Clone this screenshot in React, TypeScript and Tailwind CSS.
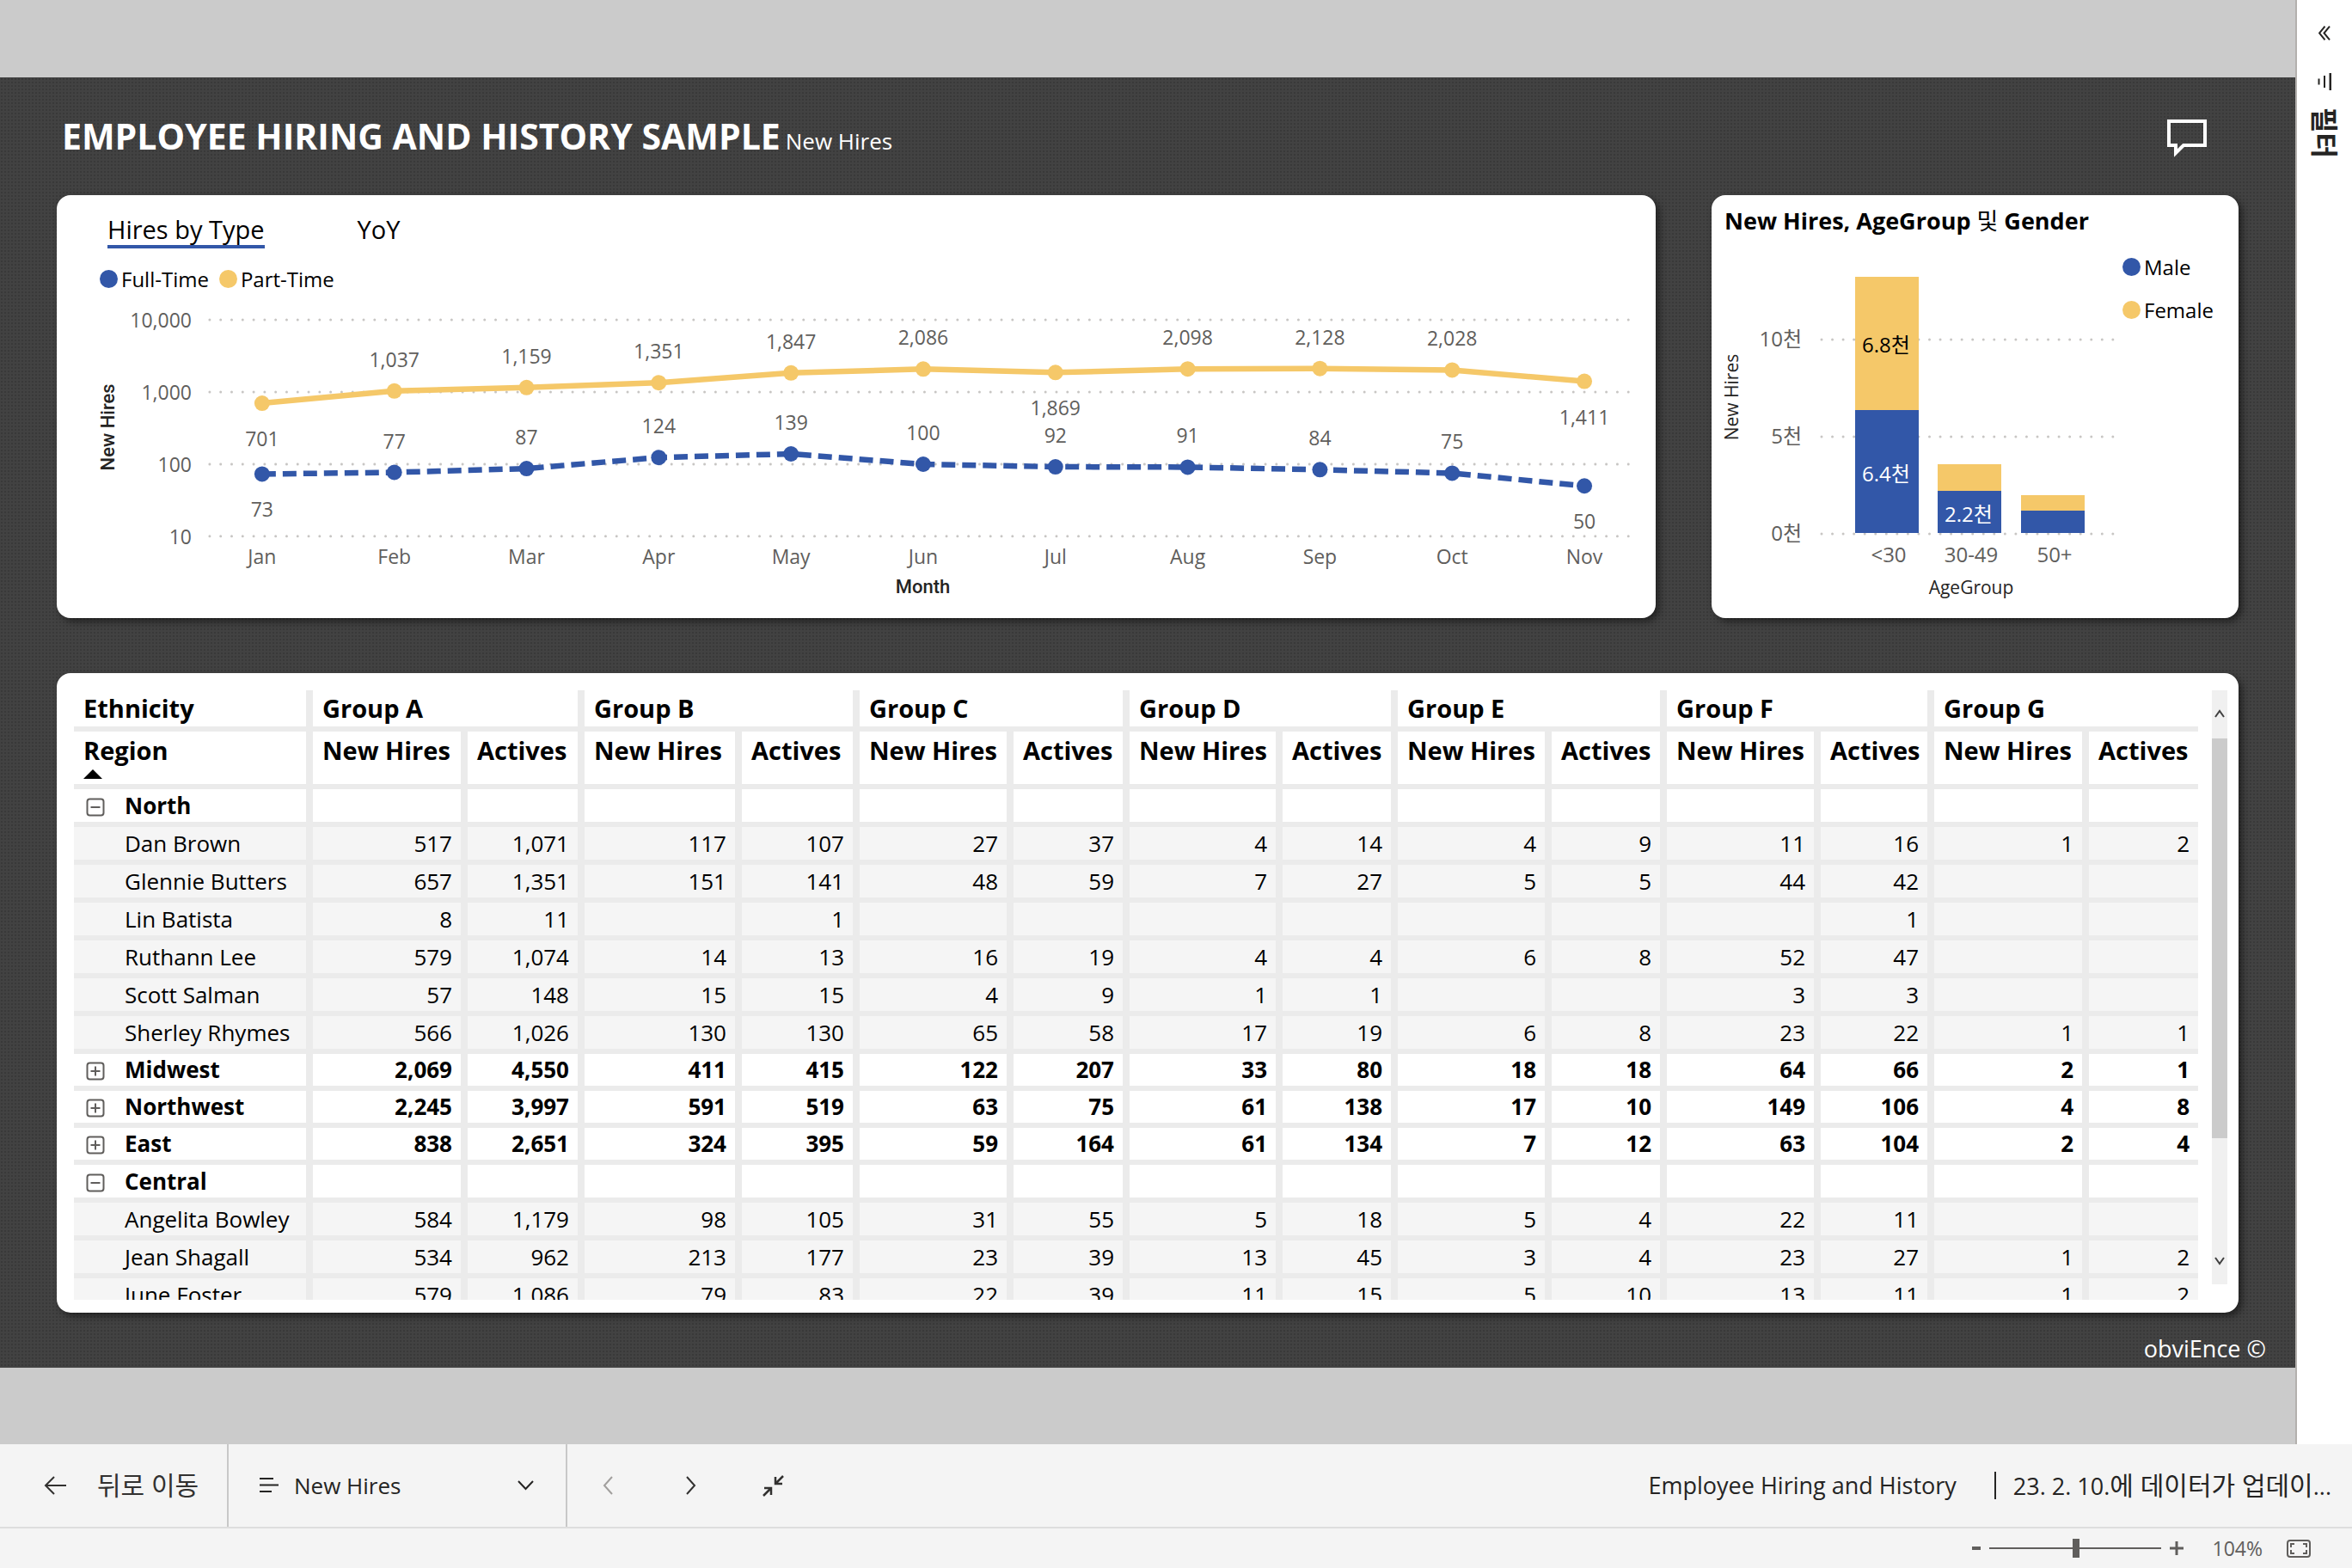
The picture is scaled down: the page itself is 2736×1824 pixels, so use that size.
import { useState } from 'react'

const FULL_TIME = '#3257A8'
const PART_TIME = '#F5C869'

const months = ['Jan', 'Feb', 'Mar', 'Apr', 'May', 'Jun', 'Jul', 'Aug', 'Sep', 'Oct', 'Nov']
const partTime = [701, 1037, 1159, 1351, 1847, 2086, 1869, 2098, 2128, 2028, 1411]
const fullTime = [73, 77, 87, 124, 139, 100, 92, 91, 84, 75, 50]
// months whose label sits under the point
const partBelow = [0, 6, 10]
const fullBelow = [0, 10]

const groups = ['A', 'B', 'C', 'D', 'E', 'F', 'G']

type Row = { name: string; kind: 'open' | 'closed' | 'child'; values: string[] }

const rows: Row[] = [
  { name: 'North', kind: 'open', values: [] },
  { name: 'Dan Brown', kind: 'child', values: ['517', '1,071', '117', '107', '27', '37', '4', '14', '4', '9', '11', '16', '1', '2'] },
  { name: 'Glennie Butters', kind: 'child', values: ['657', '1,351', '151', '141', '48', '59', '7', '27', '5', '5', '44', '42', '', ''] },
  { name: 'Lin Batista', kind: 'child', values: ['8', '11', '', '1', '', '', '', '', '', '', '', '1', '', ''] },
  { name: 'Ruthann Lee', kind: 'child', values: ['579', '1,074', '14', '13', '16', '19', '4', '4', '6', '8', '52', '47', '', ''] },
  { name: 'Scott Salman', kind: 'child', values: ['57', '148', '15', '15', '4', '9', '1', '1', '', '', '3', '3', '', ''] },
  { name: 'Sherley Rhymes', kind: 'child', values: ['566', '1,026', '130', '130', '65', '58', '17', '19', '6', '8', '23', '22', '1', '1'] },
  { name: 'Midwest', kind: 'closed', values: ['2,069', '4,550', '411', '415', '122', '207', '33', '80', '18', '18', '64', '66', '2', '1'] },
  { name: 'Northwest', kind: 'closed', values: ['2,245', '3,997', '591', '519', '63', '75', '61', '138', '17', '10', '149', '106', '4', '8'] },
  { name: 'East', kind: 'closed', values: ['838', '2,651', '324', '395', '59', '164', '61', '134', '7', '12', '63', '104', '2', '4'] },
  { name: 'Central', kind: 'open', values: [] },
  { name: 'Angelita Bowley', kind: 'child', values: ['584', '1,179', '98', '105', '31', '55', '5', '18', '5', '4', '22', '11', '', ''] },
  { name: 'Jean Shagall', kind: 'child', values: ['534', '962', '213', '177', '23', '39', '13', '45', '3', '4', '23', '27', '1', '2'] },
  { name: 'June Foster', kind: 'child', values: ['579', '1,086', '79', '83', '22', '39', '11', '15', '5', '10', '13', '11', '1', '2'] },
]

function Legend({ color, label }: { color: string; label: string }) {
  return (
    <span className="flex items-center gap-1 text-[24px] leading-8 text-black">
      <svg width="21" height="21" viewBox="0 0 21 21"><circle cx="10.5" cy="10.5" r="10.5" fill={color} /></svg>
      {label}
    </span>
  )
}

function HiresChart() {
  const px = (i: number) => 239 + i * 153.9
  const py = (v: number) => 278 - (Math.log10(v) - 1) * 83.9
  const points = (data: number[]) => data.map((v, i) => `${px(i)},${py(v)}`).join(' ')

  return (
    <svg viewBox="0 0 1861 373" className="mt-[5px] block w-full" fontSize="23" fill="#605E5C" role="img" aria-label="New hires by month">
      {['10,000', '1,000', '100', '10'].map((tick, i) => (
        <g key={tick}>
          <line x1="178" x2="1833" y1={26 + i * 84} y2={26 + i * 84} stroke="#c8c6c4" strokeWidth="3" strokeLinecap="round" strokeDasharray="0 12.8" />
          <text x="157" y={35 + i * 84} textAnchor="end">{tick}</text>
        </g>
      ))}
      <polyline points={points(partTime)} fill="none" stroke={PART_TIME} strokeWidth="6.500" strokeLinejoin="round" />
      <polyline points={points(fullTime)} fill="none" stroke={FULL_TIME} strokeWidth="6.500" strokeLinejoin="round" strokeDasharray="16 8" />
      {months.map((month, i) => (
        <g key={month} textAnchor="middle">
          <circle cx={px(i)} cy={py(partTime[i])} r="9" fill={PART_TIME} />
          <circle cx={px(i)} cy={py(fullTime[i])} r="9" fill={FULL_TIME} />
          <text x={px(i)} y={py(partTime[i]) + (partBelow.includes(i) ? 50 : -28)}>{partTime[i].toLocaleString('en-US')}</text>
          <text x={px(i)} y={py(fullTime[i]) + (fullBelow.includes(i) ? 50 : -28)}>{fullTime[i]}</text>
          <text x={px(i)} y="310">{month}</text>
        </g>
      ))}
      <g fontFamily="Roboto" fontSize="22" fontWeight="500" fill="#252423" textAnchor="middle">
        <text x="1008" y="344">Month</text>
        <text transform="translate(67 151) rotate(-90)">New Hires</text>
      </g>
    </svg>
  )
}

const bars = [
  { label: '<30', x: 167, top: 39, split: 194, female: '6.8천', male: '6.4천' },
  { label: '30-49', x: 263, top: 257, split: 288, female: '', male: '2.2천' },
  { label: '50+', x: 360, top: 293, split: 311, female: '', male: '' },
]

function AgeChart() {
  return (
    <svg viewBox="0 0 478 436" className="block min-w-0 flex-1" fontSize="24" fill="#605E5C" role="img" aria-label="New hires by age group and gender">
      {['10천', '5천', '0천'].map((tick, i) => (
        <g key={tick}>
          <line x1="128" x2="468" y1={112 + i * 113} y2={112 + i * 113} stroke="#c8c6c4" strokeWidth="3" strokeLinecap="round" strokeDasharray="0 12.55" />
          <text x="105" y={120 + i * 113} textAnchor="end">{tick}</text>
        </g>
      ))}
      {bars.map(bar => (
        <g key={bar.label} textAnchor="middle">
          <rect x={bar.x} y={bar.top} width="74" height={bar.split - bar.top} fill={PART_TIME} />
          <rect x={bar.x} y={bar.split} width="74" height={337 - bar.split} fill={FULL_TIME} />
          <text x={bar.x + 36} y={(bar.top + bar.split) / 2 + 10} fill="#000">{bar.female}</text>
          <text x={bar.x + 36} y={(bar.split + 337) / 2 + 11} fill="#fff">{bar.male}</text>
          <text x={bar.x + 39} y="371">{bar.label}</text>
        </g>
      ))}
      <g fontSize="21" fill="#252423" textAnchor="middle">
        <text x="302" y="408">AgeGroup</text>
        <text transform="translate(31 179) rotate(-90)">New Hires</text>
      </g>
    </svg>
  )
}

function ExpandIcon({ open }: { open: boolean }) {
  return (
    <svg width="22" height="22" viewBox="0 0 22 22" fill="none" stroke="#605E5C" strokeWidth="2">
      <rect x="1.5" y="1.5" width="19" height="19" rx="3" />
      <path d={open ? 'M5.5 11h11' : 'M5.5 11h11M11 5.5v11'} />
    </svg>
  )
}

function Matrix() {
  const line = 'border-[#ebebeb]'
  return (
    <table className="w-full table-fixed border-separate border-spacing-0 text-[26px] leading-8 text-black">
      <colgroup>
        <col className="w-[278px]" />
        <col className="w-[180px]" /><col className="w-[136px]" />
        <col className="w-[183px]" /><col className="w-[137px]" />
        <col className="w-[179px]" /><col className="w-[135px]" />
        <col className="w-[178px]" /><col className="w-[134px]" />
        <col className="w-[179px]" /><col className="w-[134px]" />
        <col className="w-[179px]" /><col className="w-[132px]" />
        <col className="w-[180px]" /><col className="w-[127px]" />
      </colgroup>
      <thead className="text-left text-[29px]">
        <tr className="h-12">
          <th className={`border-r-8 border-b-6 p-0 pl-[11px] ${line}`}>Ethnicity</th>
          {groups.map(g => (
            <th key={g} colSpan={2} className={`border-r-8 border-b-6 p-0 pl-[11px] last:border-r-0 ${line}`}>Group {g}</th>
          ))}
        </tr>
        <tr className="h-[67px] align-top">
          <th className={`border-r-8 border-b-6 p-0 pt-1.5 pl-[11px] ${line}`} aria-sort="ascending">
            Region
            <svg width="22" height="11" viewBox="0 0 22 11" className="mt-1.5 block"><path d="M11 0l11 11H0z" /></svg>
          </th>
          {groups.map(g => [
            <th key={g + 'n'} className={`border-r-8 border-b-6 p-0 pt-1.5 pl-[11px] whitespace-nowrap ${line}`}>New Hires</th>,
            <th key={g + 'a'} className={`border-r-8 border-b-6 p-0 pt-1.5 pl-[11px] last:border-r-0 ${line}`}>Actives</th>,
          ])}
        </tr>
      </thead>
      <tbody>
        {rows.map(row => (
          <tr
            key={row.name}
            className={row.kind === 'child' ? 'h-11 bg-[#f5f5f5]' : row.kind === 'open' ? 'h-11 font-bold' : 'h-[43px] font-bold'}
          >
            <th scope="row" className={`border-r-8 border-b-6 p-0 text-left ${line} ${row.kind === 'child' ? 'pl-[59px] font-normal' : 'pl-[14px] font-bold'}`}>
              {row.kind === 'child' ? row.name : (
                <span className="flex items-center gap-[23px]">
                  <button aria-label={row.kind === 'open' ? 'Collapse' : 'Expand'} className="pt-1">
                    <ExpandIcon open={row.kind === 'open'} />
                  </button>
                  {row.name}
                </span>
              )}
            </th>
            {Array.from({ length: 14 }, (_, i) => (
              <td key={i} className={`border-r-8 border-b-6 p-0 pr-[10px] text-right last:border-r-0 ${line}`}>{row.values[i]}</td>
            ))}
          </tr>
        ))}
      </tbody>
    </table>
  )
}

const card = 'rounded-2xl bg-white shadow-[4px_4px_8px_rgba(0,0,0,0.5)]'

export default function App() {
  const [tab, setTab] = useState('Hires by Type')
  const [zoom, setZoom] = useState(104)

  return (
    <div className="flex min-h-screen flex-col bg-[#f4f4f4] font-['Open_Sans','Noto_Sans_CJK_KR',sans-serif] text-[#252423]">
      <div className="flex flex-1">
        <main className="flex min-w-0 flex-1 flex-col justify-center bg-[#cbcbcb]">
          {/* dark canvas with a fine dotted weave */}
          <div className="bg-[#424242] bg-[radial-gradient(#393939_1px,transparent_1px)] bg-size-[4px_4px] px-[66px]">
            <header className="flex h-[137px] items-center justify-between pt-1.5 pr-[37px] pl-1.5 text-white">
              <h1 className="flex items-baseline gap-1.5 text-[41px] leading-[56px] font-bold">
                EMPLOYEE HIRING AND HISTORY SAMPLE
                <span className="text-[26px] font-normal">New Hires</span>
              </h1>
              <button aria-label="Comments">
                <svg width="46" height="44" viewBox="0 0 46 44" fill="none" stroke="currentColor" strokeWidth="4">
                  <path d="M2 2h42v28H19l-9 9v-9H2z" />
                </svg>
              </button>
            </header>

            <div className="flex gap-[65px]">
              <section className={`min-w-0 flex-1 ${card}`}>
                <div className="flex gap-[108px] pt-[22px] pl-[59px] text-[29px] leading-9 text-black">
                  {['Hires by Type', 'YoY'].map(name => (
                    <button
                      key={name}
                      onClick={() => setTab(name)}
                      className={`border-b-4 ${tab === name ? 'border-[#3257A8]' : 'border-transparent'}`}
                    >
                      {name}
                    </button>
                  ))}
                </div>
                <div className="flex gap-3 pt-5 pl-[50px]">
                  <Legend color={FULL_TIME} label="Full-Time" />
                  <Legend color={PART_TIME} label="Part-Time" />
                </div>
                <HiresChart />
              </section>

              <section className={`w-[613px] ${card}`}>
                <h2 className="px-[15px] pt-3 pb-2 text-[27px] leading-9 font-bold whitespace-nowrap text-black">
                  New Hires, AgeGroup <span className="font-normal">및</span> Gender
                </h2>
                <div className="flex items-start">
                  <AgeChart />
                  <div className="flex w-[135px] flex-col gap-[18px] pt-3">
                    <Legend color={FULL_TIME} label="Male" />
                    <Legend color={PART_TIME} label="Female" />
                  </div>
                </div>
              </section>
            </div>

            <section className={`mt-16 flex gap-4 pt-5 pr-[13px] pb-[15px] pl-5 ${card}`}>
              <div className="h-[709px] min-w-0 flex-1 overflow-hidden">
                <Matrix />
              </div>
              <div className="flex h-[691px] w-[18px] flex-col items-center bg-[#f0f0f0] text-[#404040]">
                <svg width="12" height="10" viewBox="0 0 12 10" fill="none" stroke="currentColor" strokeWidth="2" className="mt-[22px]"><path d="M1 9l5-7 5 7" /></svg>
                <div className="mt-6 mb-auto h-[465px] w-full bg-[#cbcbcb]" />
                <svg width="12" height="10" viewBox="0 0 12 10" fill="none" stroke="currentColor" strokeWidth="2" className="mb-[22px]"><path d="M1 1l5 7 5-7" /></svg>
              </div>
            </section>
            <footer className="-mr-8 pt-6 pb-1 text-right text-[27px] leading-9 text-white">obviEnce ©</footer>
          </div>
        </main>

        <aside className="flex w-[66px] flex-col items-center border-l-2 border-[#b3b0ad] bg-white pt-[30px]">
          <button aria-label="Expand filters">
            <svg width="14" height="17" viewBox="0 0 14 17" fill="none" stroke="#252423" strokeWidth="2"><path d="M7.500 .7L1 8.500l6.500 7.800M13 .7L6.500 8.500l6.500 7.800" /></svg>
          </button>
          <div className="mt-[38px] flex items-center gap-5 [text-orientation:sideways] [writing-mode:vertical-rl]">
            <svg width="16" height="20" viewBox="0 0 16 20" stroke="#252423" strokeWidth="2"><path d="M15 0v20" strokeWidth="3" /><path d="M8 3v14M1.500 6.500v7" /></svg>
            <h2 className="text-[32px] leading-9 font-bold">필터</h2>
          </div>
        </aside>
      </div>

      <nav className="flex h-[98px] items-center border-b-2 border-[#dedede] text-[27px] leading-9">
        <button className="flex h-full w-[266px] items-center gap-9 border-r-2 border-[#c8c8c8] pl-[51px] text-[30px] text-[#323130]">
          <svg width="26" height="22" viewBox="0 0 26 22" fill="none" stroke="currentColor" strokeWidth="2"><path d="M12 1L2 11l10 10M2 11h24" /></svg>
          뒤로 이동
        </button>
        <button className="flex h-full w-[394px] items-center border-r-2 border-[#c8c8c8] pr-[37px] pl-9 text-[26px]">
          <svg width="22" height="18" viewBox="0 0 22 18" stroke="currentColor" strokeWidth="2"><path d="M0 1h16M0 8.500h22M0 16h14" /></svg>
          <span className="ml-[18px] flex-1 text-left">New Hires</span>
          <svg width="19" height="12" viewBox="0 0 19 12" fill="none" stroke="currentColor" strokeWidth="2"><path d="M1 1l8.500 9L18 1" /></svg>
        </button>
        <div className="flex flex-1 items-center pl-[41px] text-[#323130]">
          <button aria-label="Previous page" disabled className="mr-[85px] text-[#a19f9d]">
            <svg width="12" height="22" viewBox="0 0 12 22" fill="none" stroke="currentColor" strokeWidth="2"><path d="M11 1L2 11l9 10" /></svg>
          </button>
          <button aria-label="Next page" className="mr-[77px]">
            <svg width="12" height="22" viewBox="0 0 12 22" fill="none" stroke="currentColor" strokeWidth="2"><path d="M1 1l9 10-9 10" /></svg>
          </button>
          <button aria-label="Exit full screen">
            <svg width="25" height="25" viewBox="0 0 25 25" fill="none" stroke="currentColor" strokeWidth="2.5"><path d="M24 1l-9 9M15 2v8h8M1 24l9-9M2 15h8v8" /></svg>
          </button>
        </div>
        <span>Employee Hiring and History</span>
        <span className="mr-[20px] ml-[44px] h-8 border-l-2" />
        <span className="pr-6">23. 2. 10.<span className="text-[30px]">에 데이터가 업데이</span>...</span>
      </nav>

      <div className="flex h-[46px] items-center justify-end pr-12 text-[#605E5C]">
        <button aria-label="Zoom out"><svg width="10" height="4" viewBox="0 0 10 4" fill="currentColor"><path d="M0 0h10v4H0z" /></svg></button>
        <input
          type="range"
          aria-label="Zoom"
          min={10}
          max={196}
          value={zoom}
          onChange={e => setZoom(Number(e.target.value))}
          className="mx-[10px] h-6 w-[200px] appearance-none bg-transparent [&::-webkit-slider-runnable-track]:h-[2px] [&::-webkit-slider-runnable-track]:bg-[#605E5C] [&::-webkit-slider-thumb]:-mt-[10px] [&::-webkit-slider-thumb]:h-[22px] [&::-webkit-slider-thumb]:w-2 [&::-webkit-slider-thumb]:appearance-none [&::-webkit-slider-thumb]:bg-[#605E5C]"
        />
        <button aria-label="Zoom in"><svg width="16" height="16" viewBox="0 0 16 16" stroke="currentColor" strokeWidth="3"><path d="M0 8h16M8 0v16" /></svg></button>
        <span className="mr-7 ml-[34px] text-[23px] leading-8">{zoom}%</span>
        <button aria-label="Fit to page">
          <svg width="28" height="21" viewBox="0 0 28 21" fill="none" stroke="currentColor" strokeWidth="2">
            <rect x="1" y="1" width="26" height="19" rx="3" />
            <path d="M5 9V5h4M19 5h4v4M23 12v4h-4M9 16H5v-4" />
          </svg>
        </button>
      </div>
    </div>
  )
}
